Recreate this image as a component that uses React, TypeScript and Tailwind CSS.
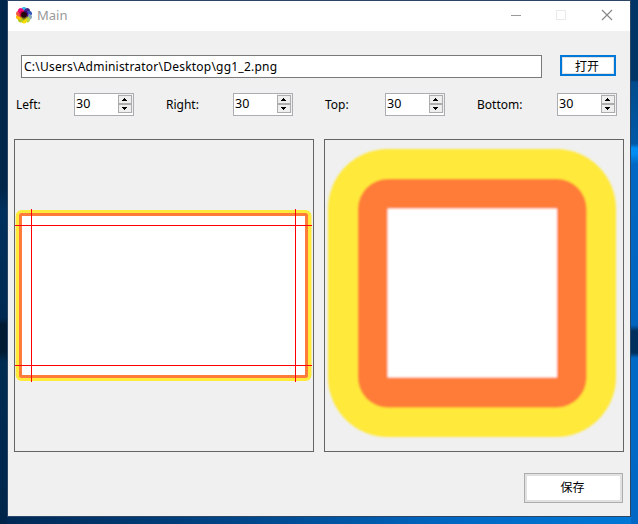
import React from 'react';

function Spinner({ label, labelWidth, className }: { label: string; labelWidth: string; className: string }) {
  return (
    <div className={`flex h-[23px] ${className}`}>
      <span className={`shrink-0 pt-[3px] leading-[18px] ${labelWidth}`}>{label}</span>
      <div className="flex h-[23px] w-[60px] shrink-0 border border-[#abadb3] bg-white pl-px">
        <span className="w-[42px] text-[12.5px] leading-[19px]">30</span>
        <div className="flex h-[19px] w-[15px] flex-col bg-[#f0f0f0] pt-px">
          <StepButton d="M5 5h5v1H5zM6 4h3v1H6zM7 3h1v1H7z" />
          <StepButton d="M5 3h5v1H5zM6 4h3v1H6zM7 5h1v1H7z" />
        </div>
      </div>
    </div>
  );
}

function StepButton({ d }: { d: string }) {
  return (
    <div className="h-[9px] w-[14px] border border-[#acacac] bg-[#eeeeee]">
      <svg className="-ml-[2px] -mt-px block" width="14" height="9" viewBox="0 0 14 9" shapeRendering="crispEdges">
        <path d={d} fill="black" />
      </svg>
    </div>
  );
}

function AppIcon() {
  const colors = ['#35b9ee', '#402783', '#3454ba', '#8ca9bb', '#b5d748', '#ffdc00', '#b5c71f', '#ffbd00', '#f05a45', '#ed0a79'];
  return (
    <svg className="ml-2 mt-[6px] shrink-0" width="16" height="17" viewBox="0 0 16 17">
      {colors.map((color, i) => (
        <ellipse key={color} cx="8" cy="3.5" rx="2.8" ry="3.5" fill={color} transform={`rotate(${i * 36} 8 8.3)`} />
      ))}
      <path d="M3.500 7L5 4H8V8L4 10Z" fill="#c8003d" />
      <path d="M8 4H11L12.500 7L12 10L8 8Z" fill="#42108e" />
      <path d="M4 10L8 8L12 10L8 13Z" fill="#827b20" />
      <circle cx="8" cy="7.800" r="3" fill="#27050f" />
    </svg>
  );
}

export default function App() {
  return (
    <div className="h-[524px] w-[638px] overflow-hidden bg-[linear-gradient(to_right,#00204a_0px,#002955_8px,#00478b_250px,#0068c4_460px,#0078d7_638px)] font-['Noto_Sans','Noto_Sans_CJK_SC',sans-serif] text-[12px] text-black">
      <div className="flex h-[524px]">
        <div className="w-[7px] shrink-0 bg-[linear-gradient(#00264b_0px,#00264b_190px,#00305e_210px,#002a52_318px,#001a34_324px,#001a34_352px,#002c52_362px,#00254b_524px)]" />
        <div className="h-[517px] w-[624px] shrink-0 border border-[#2b4765] bg-[#f0f0f0]">
          <header className="flex h-[30px] bg-white">
            <AppIcon />
            <span className="ml-[5px] w-[472px] pt-[4px] text-[13px] leading-[20px] text-[#999999]">Main</span>
            <svg width="110" height="30" viewBox="0 0 110 30" fill="none">
              <path d="M2 14.5H12" stroke="#999999" />
              <path d="M47.5 9.5H56.500V18.500H47.5Z" stroke="#e9e9e9" />
              <path d="M93 9L103 19M103 9L93 19" stroke="#888888" strokeWidth="1.2" />
            </svg>
          </header>
          <div className="flex pl-[13px] pt-[24px]">
            <div className="h-[23px] w-[521px] border border-[#7a7a7a] bg-white pl-[2px] leading-[21px] tracking-[0.22px]">C:\Users\Administrator\Desktop\gg1_2.png</div>
            <button className="ml-[18px] flex h-[21px] w-[56px] items-center justify-center border-2 border-[#0078d7] bg-white pr-[2px] pt-[2px] shadow-[inset_0_0_0_1px_#e1e1e1]">打开</button>
          </div>
          <div className="flex pl-2 pt-[15px]">
            <Spinner label="Left:" labelWidth="w-[58px]" className="w-[150px]" />
            <Spinner label="Right:" labelWidth="w-[67px]" className="w-[159px]" />
            <Spinner label="Top:" labelWidth="w-[60px]" className="w-[152px]" />
            <Spinner label="Bottom:" labelWidth="w-[80px]" className="w-[140px]" />
          </div>
          <div className="flex gap-[10px] pl-[6px] pt-[23px]">
            <div className="h-[313px] w-[300px] border border-[#646464]">
              <svg width="298" height="311" viewBox="15 140 298 311">
                <rect x="15.700" y="210" width="295.800" height="171" rx="6" fill="#ffe93a" />
                <rect x="19" y="213" width="289" height="165" rx="2.500" fill="#ff7b39" />
                <rect x="22" y="216" width="283" height="159" fill="white" />
                <path d="M31.5 209V382M295.5 209V382M15 225.5H312M15 365.5H312" stroke="#ff0000" shapeRendering="crispEdges" />
              </svg>
            </div>
            <div className="h-[313px] w-[300px] border border-[#646464]">
              <svg width="298" height="311" viewBox="325 140 298 311">
                <defs>
                  <filter id="soft"><feGaussianBlur stdDeviation="0.8" /></filter>
                </defs>
                <g filter="url(#soft)">
                  <rect x="328" y="149" width="288" height="288" rx="60" fill="#ffe93a" />
                  <rect x="358" y="179" width="228.500" height="228.500" rx="30" fill="#ff7b39" />
                  <rect x="387.500" y="208.500" width="169.500" height="169" fill="white" />
                </g>
              </svg>
            </div>
          </div>
          <div className="flex justify-end pr-[7px] pt-[21px]">
            <button className="flex h-[30px] w-[99px] items-center justify-center border border-[#adadad] bg-white pr-[2px] shadow-[inset_0_0_0_2px_#e1e1e1]">保存</button>
          </div>
        </div>
        <div className="w-[7px] shrink-0 bg-[linear-gradient(#003566_0px,#003566_80px,#004b8c_82px,#0059a8_144px,#008cf0_148px,#008cf0_154px,#0068c4_164px,#0064be_325px,#00305e_331px,#00305e_353px,#0069c6_358px,#0068c4_524px)]" />
      </div>
    </div>
  );
}
